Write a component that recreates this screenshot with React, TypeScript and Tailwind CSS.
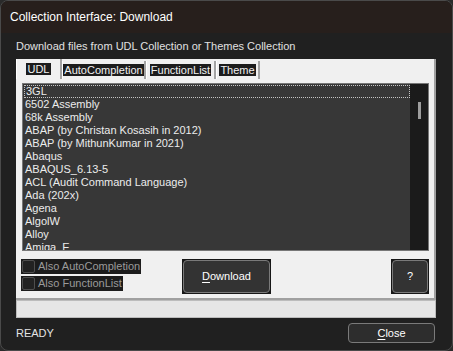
import React from "react";

const items = [
  "3GL",
  "6502 Assembly",
  "68k Assembly",
  "ABAP (by Christan Kosasih in 2012)",
  "ABAP (by MithunKumar in 2021)",
  "Abaqus",
  "ABAQUS_6.13-5",
  "ACL (Audit Command Language)",
  "Ada (202x)",
  "Agena",
  "AlgolW",
  "Alloy",
  "Amiga_E",
  "AngelScript",
];

function Tab({ label, width, selected }: { label: string; width: string; selected?: boolean }) {
  return (
    <div
      className={
        width +
        " flex items-center justify-center border-r-2 border-[#a3a3a3] " +
        (selected ? "h-[20px] border-l border-l-white" : "h-[18px] border-l border-l-white")
      }
    >
      <span className="bg-[#1c1c1c] text-[#f2f2f2] text-[11px] leading-[12px] px-[1px]">{label}</span>
    </div>
  );
}

function Check({ label }: { label: string }) {
  return (
    <div className="flex">
      <div className="flex h-[15px] items-center bg-[#1c1c1c] pr-[1px]">
        <span className="ml-[1px] h-[13px] w-[13px] shrink-0 rounded-[2px] border border-[#4e4e4e] bg-[#222]" />
        <span className="ml-[3px] text-[11px] leading-[15px] text-[#9a9a9a]">{label}</span>
      </div>
    </div>
  );
}

export default function App() {
  return (
    <div className="w-[453px] h-[351px] bg-[#2a2a2a] font-['Liberation_Sans',Arial,sans-serif]">
      <div className="flex h-full w-full flex-col overflow-hidden rounded-[8px] border border-[#4a4a4a] bg-[#202020]">
        <div className="flex h-[32px] shrink-0 items-center bg-[#271f1c] pl-[9px] text-[12px] text-white">
          Collection Interface: Download
        </div>
        <div className="flex flex-1 flex-col pl-[15px]">
          <div className="mt-[7px] h-[13px] text-[11px] leading-[13px] text-[#e0e0e0]">
            Download files from UDL Collection or Themes Collection
          </div>
          <div className="mt-[6px] flex w-[420px] flex-col border-r-2 border-b-2 border-[#a0a0a0] bg-[#f0f0f0]">
            <div className="flex h-[20px] items-end">
              <Tab label="UDL" width="w-[46px]" selected />
              <Tab label="AutoCompletion" width="w-[84px]" />
              <Tab label="FunctionList" width="w-[70px]" />
              <Tab label="Theme" width="w-[44px]" />
            </div>
            <div className="flex flex-col pl-[6px] pr-[5px] pt-[4px] pb-[4px]">
              <div className="flex h-[168px] w-[407px] border border-[#777] bg-[#373737]">
                <div className="flex flex-1 flex-col overflow-hidden pt-[1px]">
                  {items.map((it, i) => (
                    <div
                      key={it}
                      className={
                        "ml-[1px] h-[13px] shrink-0 whitespace-nowrap pl-[1px] text-[11px] text-[#ececec] " +
                        (i === 0 ? "border border-dotted border-[#c4c4c4] leading-[11px] pl-0" : "leading-[13px]")
                      }
                    >
                      {it}
                    </div>
                  ))}
                </div>
                <div className="w-[18px] bg-[#1b1b1b] pl-[8px] pt-[18px]">
                  <div className="h-[17px] w-[3px] bg-[#9d9d9d]" />
                </div>
              </div>
              <div className="mt-[8px] flex h-[35px] items-start">
                <div className="-ml-[1px] flex w-[161px] flex-col gap-[2px]">
                  <Check label="Also AutoCompletion" />
                  <Check label="Also FunctionList" />
                </div>
                <button className="h-[35px] w-[89px] bg-[#161616] p-px">
                  <span className="flex h-full w-full items-center justify-center rounded-[4px] border border-[#7a7a7a] bg-[#333] text-[11px] text-white">
                    <span className="underline underline-offset-2">D</span>ownload
                  </span>
                </button>
                <div className="flex-1" />
                <button className="h-[35px] w-[38px] bg-[#161616] p-px">
                  <span className="flex h-full w-full items-center justify-center rounded-[4px] border border-[#7a7a7a] bg-[#333] text-[11px] text-white">
                    ?
                  </span>
                </button>
              </div>
            </div>
          </div>
          <div className="h-[18px] w-[420px] border border-[#bcbcbc] bg-[#e6e6e6]" />
          <div className="mt-[5px] flex w-[419px] items-center justify-between">
            <span className="text-[11px] leading-[13px] text-[#e4e4e4]">READY</span>
            <button className="flex h-[20px] w-[87px] items-center justify-center rounded-[4px] border border-[#7a7a7a] bg-[#2d2d2d] text-[11px] text-white">
              <span className="underline underline-offset-2">C</span>lose
            </button>
          </div>
        </div>
      </div>
    </div>
  );
}
